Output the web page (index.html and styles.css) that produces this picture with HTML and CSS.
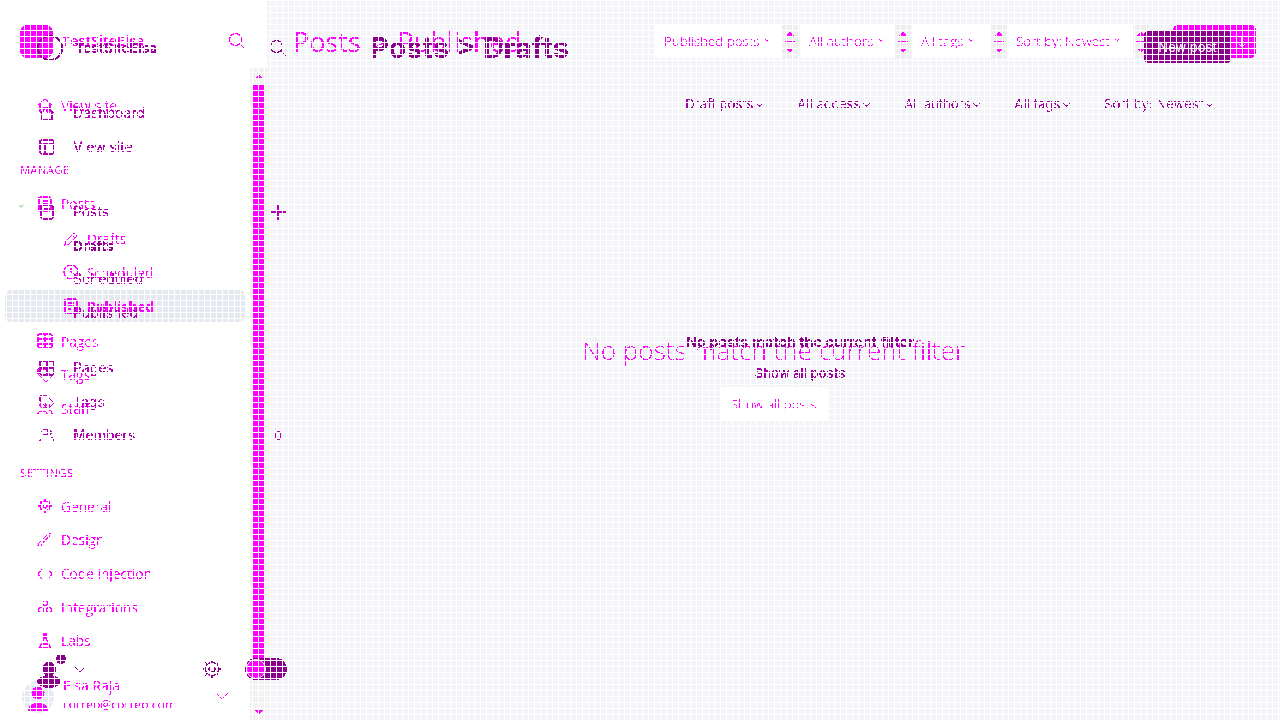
FILE: index.html
```html
<!DOCTYPE html>
<html lang="en">
<head>
    <meta charset="UTF-8">
    <title>Posts - TestSiteElsa</title>
    <link rel="stylesheet" href="styles.css">
</head>
<body>
<svg class="defs" width="0" height="0">
    <filter id="hard-a" color-interpolation-filters="sRGB">
        <feComponentTransfer>
            <feFuncG type="table" tableValues="0 0 0 0 0 0 0 0 0 0 0 .95 .95 .95 .95 .95 .95 .85 .9 .95 1"/>
            <feFuncA type="discrete" tableValues="0 1"/>
        </feComponentTransfer>
    </filter>
    <filter id="hard-b" color-interpolation-filters="sRGB">
        <feComponentTransfer>
            <feFuncA type="discrete" tableValues="0 1"/>
        </feComponentTransfer>
    </filter>
</svg>
<div class="stage">

    <!-- first layer, magenta -->
    <div class="layer layer-a">
        <aside class="side-a">
            <div class="brand-a">
                <span class="logo-a"></span>
                <span class="brand-name">TestSiteElsa</span>
                <svg class="search-a" viewBox="0 0 18 18"><circle cx="7.5" cy="7.5" r="6"/><path d="M12 12l5 5"/></svg>
            </div>
            <div class="side-body">
                <nav class="nav-a">
                    <a class="row"><svg class="ico" viewBox="0 0 16 16"><path d="M1 8l7-6 7 6M3 7v8h3v-4h4v4h3V7"/></svg>View site</a>
                    <h4 class="nav-title manage">MANAGE</h4>
                    <a class="row wide"><svg class="ico" viewBox="0 0 16 16"><rect x="2" y="1" width="12" height="14" rx="1"/><path d="M5 5h6M5 8h6"/></svg>Posts<svg class="toggle-a" viewBox="0 0 8 6"><path d="M1 1l3 3 3-3"/></svg></a>
                    <a class="row sub"><svg class="ico" viewBox="0 0 16 16"><path d="M2 14l1-4 8-8 3 3-8 8zM9 4l3 3"/></svg>Drafts</a>
                    <a class="row sub"><svg class="ico" viewBox="0 0 16 16"><circle cx="8" cy="8" r="7"/><path d="M8 4v4l3 2"/></svg>Scheduled</a>
                    <a class="row sub active"><svg class="ico" viewBox="0 0 16 16"><rect x="2" y="1" width="12" height="14" rx="1"/><path d="M5 5h6M5 8h6M5 11h3"/></svg>Published</a>
                    <a class="row"><svg class="ico" viewBox="0 0 16 16"><rect x="1" y="1" width="14" height="14" rx="1"/><path d="M8 1v14M1 6h14M1 11h14"/></svg>Pages</a>
                    <a class="row"><svg class="ico" viewBox="0 0 16 16"><path d="M1 2h7l7 7-6 6-8-8zM5 6h.5"/></svg>Tags</a>
                    <a class="row"><svg class="ico" viewBox="0 0 16 16"><circle cx="6" cy="5" r="3"/><path d="M1 14c0-4 9-4 9 0M11 3a3 3 0 0 1 0 5M12 10c2 0 3 2 3 4"/></svg>Staff</a>
                    <h4 class="nav-title">SETTINGS</h4>
                    <a class="row"><svg class="ico" viewBox="0 0 16 16"><circle cx="8" cy="8" r="5"/><circle cx="8" cy="8" r="2"/><path d="M8 1v2M8 13v2M1 8h2M13 8h2M3 3l1.500 1.500M11.500 11.500L13 13M3 13l1.500-1.500M11.500 4.500L13 3"/></svg>General</a>
                    <a class="row"><svg class="ico" viewBox="0 0 16 16"><path d="M1 15c3 0 4-1 4-3l9-10-2-1-9 9c-2 1-2 3-2 5z"/></svg>Design</a>
                    <a class="row"><svg class="ico" viewBox="0 0 16 16"><path d="M5 3L1 8l4 5M11 3l4 5-4 5"/></svg>Code injection</a>
                    <a class="row"><svg class="ico" viewBox="0 0 16 16"><circle cx="8" cy="4" r="2.500"/><circle cx="4" cy="11" r="2.500"/><circle cx="12" cy="11" r="2.500"/></svg>Integrations</a>
                    <a class="row"><svg class="ico" viewBox="0 0 16 16"><path d="M6 1h4M7 1v5l-5 9h12L9 6V1M4 11h8"/></svg>Labs</a>
                    <div class="user-a">
                        <span class="avatar-a"><svg viewBox="0 0 32 32"><circle cx="16" cy="12" r="6.500"/><path d="M6 30c0-11 20-11 20 0z"/></svg></span>
                        <div class="user-text">
                            <div class="user-name">Elsa Raja</div>
                            <div class="user-mail">correo@correo.com</div>
                        </div>
                        <svg class="user-caret" viewBox="0 0 14 8"><path d="M1 1l6 6 6-6"/></svg>
                    </div>
                </nav>
                <div class="scrollbar">
                    <span class="arrow-up"></span>
                    <span class="thumb"></span>
                    <span class="arrow-down"></span>
                </div>
            </div>
        </aside>
        <main class="main-a">
            <header class="head-a">
                <h1 class="title-a">Posts <span class="sep">&gt;</span> Published</h1>
                <div class="filters-a">
                    <div class="select w-127">Published posts <i class="caret"></i></div><span class="spin gap-after-2"></span>
                    <div class="select w-95">All authors <i class="caret"></i></div><span class="spin gap-after-1"></span>
                    <div class="select w-79">All tags <i class="caret"></i></div><span class="spin"></span>
                    <div class="select w-126">Sort by: Newest <i class="caret"></i></div><span class="spin spin-last"></span>
                </div>
                <div class="new-a"><svg viewBox="0 0 14 14"><path d="M1 3h5M1 7h5M1 11h5M10 2v10M7 9l3 3 3-3"/></svg></div>
            </header>
            <div class="empty-a">
                <div class="empty-title">No posts match the current filter</div>
                <div class="empty-btn">Show all posts</div>
            </div>
        </main>
    </div>

    <!-- second layer, purple -->
    <div class="layer layer-b">
        <aside class="side-b">
            <div class="brand-b">
                <span class="logo-b"></span>
                <span class="brand-name-b">TestSiteElsa</span>
                <svg class="search-b" viewBox="0 0 18 18"><circle cx="7.500" cy="7.500" r="6"/><path d="M12 12l5 5"/></svg>
            </div>
            <nav class="nav-b">
                <a class="row-b"><svg class="ico" viewBox="0 0 16 16"><path d="M1 8l7-6 7 6M3 7v8h10V7"/></svg>Dashboard</a>
                <a class="row-b gap-1"><svg class="ico" viewBox="0 0 16 16"><rect x="1" y="1" width="14" height="14" rx="1"/><path d="M1 5h14M6 5v10"/></svg>View site</a>
                <a class="row-b"><svg class="ico" viewBox="0 0 16 16"><rect x="2" y="1" width="12" height="14" rx="1"/><path d="M5 5h6"/></svg>Posts<svg class="plus" viewBox="0 0 18 18"><path d="M9 1v16M1 9h16"/></svg></a>
                <a class="row-b strong"><span class="ico"></span>Drafts</a>
                <a class="row-b"><span class="ico"></span>Scheduled</a>
                <a class="row-b"><span class="ico"></span>Published</a>
                <a class="row-b gap-3"><svg class="ico" viewBox="0 0 16 16"><rect x="1" y="1" width="14" height="14" rx="1"/><path d="M8 1v14M1 8h14"/></svg>Pages</a>
                <a class="row-b"><svg class="ico" viewBox="0 0 16 16"><path d="M1 2h7l7 7-6 6-8-8z"/></svg>Tags</a>
                <a class="row-b"><svg class="ico" viewBox="0 0 16 16"><circle cx="6" cy="5" r="3"/><path d="M1 14c0-4 9-4 9 0M11 3a3 3 0 0 1 0 5M12 10c2 0 3 2 3 4"/></svg>Members<span class="count">0</span></a>
            </nav>
            <div class="foot-b">
                <span class="blob">
                    <span class="blob-head"></span>
                    <span class="blob-dot"></span>
                    <span class="blob-body"></span>
                </span>
                <svg class="foot-caret" viewBox="0 0 14 8"><path d="M1 1l6 6 6-6"/></svg>
                <svg class="gear" viewBox="0 0 20 20"><circle cx="10" cy="10" r="6.500"/><circle cx="10" cy="10" r="3"/><path d="M10 1v2M10 17v2M1 10h2M17 10h2M3.500 3.500L5 5M15 15l1.500 1.500M3.500 16.500L5 15M15 5l1.500-1.500"/></svg>
                <span class="switch"><span class="knob"></span></span>
            </div>
        </aside>
        <main class="main-b">
            <header class="head-b">
                <h1 class="title-b">Posts &gt; Drafts</h1>
                <div class="new-b">New post</div>
            </header>
            <div class="filters-b">
                <span>Draft posts <i class="caret"></i></span>
                <span>All access <i class="caret"></i></span>
                <span>All authors <i class="caret"></i></span>
                <span>All tags <i class="caret"></i></span>
                <span>Sort by: Newest <i class="caret"></i></span>
            </div>
            <div class="empty-b">
                <div class="empty-b-title">No posts match the current filter</div>
                <div class="empty-b-link">Show all posts</div>
            </div>
        </main>
    </div>

    <div class="mesh"></div>
</div>
</body>
</html>
```

FILE: styles.css
```css
* {
    box-sizing: border-box;
}
html, body {
    margin: 0;
    height: 100%;
    overflow: hidden;
}
h1, h4 {
    margin: 0;
}
svg {
    display: block;
    fill: none;
    stroke: currentColor;
    stroke-width: 1.2;
}
.defs {
    position: absolute;
}
.stage {
    position: relative;
    display: grid;
    width: 1280px;
    height: 720px;
    overflow: hidden;
    background: #f3f4f7;
}
.layer {
    grid-area: 1 / 1;
    display: flex;
    min-width: 0;
    height: 720px;
}
.mesh {
    position: absolute;
    inset: 0;
    background-image:
        repeating-linear-gradient(90deg, #fff 0, #fff 1px, transparent 1px, transparent 6px),
        repeating-linear-gradient(180deg, #fff 0, #fff 1px, transparent 1px, transparent 6px);
}

/* first layer */
.layer-a {
    color: #f0f;
    font-family: "Open Sans", sans-serif;
    font-size: 13.700px;
    filter: url(#hard-a);
}
.side-a {
    display: flex;
    flex-direction: column;
    flex: none;
    width: 267px;
    background: #fff;
}
.brand-a {
    display: flex;
    align-items: flex-start;
    height: 68px;
    padding: 25px 20px 0;
}
.logo-a {
    flex: none;
    width: 33px;
    height: 33px;
    border-radius: 8px;
    background: #f0f;
}
.brand-name {
    margin-left: 9px;
    font-size: 14.400px;
    font-weight: 600;
    line-height: 32px;
}
.search-a {
    width: 18px;
    height: 18px;
    margin-top: 7px;
    margin-left: auto;
    margin-right: 1px;
}
.side-body {
    display: flex;
    flex: 1;
    min-height: 0;
}
.nav-a {
    flex: 1;
    display: flex;
    flex-direction: column;
    padding: 21px 5px 0;
}
.row {
    position: relative;
    display: flex;
    align-items: center;
    flex: none;
    height: 32px;
    margin-bottom: 1.700px;
    padding-left: 32px;
    border-radius: 6px;
}
.row .ico {
    margin-right: 8px;
}
.ico {
    flex: none;
    width: 16px;
    height: 16px;
}
.row.wide {
    margin-bottom: 3px;
}
.row.sub {
    padding-left: 58px;
}
.row.active {
    margin-bottom: 3px;
    background: #e5e9ef;
    font-weight: 700;
}
.toggle-a {
    position: absolute;
    left: 12px;
    top: 15px;
    width: 8px;
    height: 6px;
    color: #999;
}
.nav-title {
    height: 32px;
    margin: 30px 0 2px;
    padding-left: 15px;
    font-size: 11.300px;
    font-weight: 400;
    line-height: 34px;
    letter-spacing: 0.3px;
}
.nav-title.manage {
    margin-bottom: 3px;
}
.user-a {
    display: flex;
    align-items: flex-start;
    margin-top: 1px;
    padding-left: 17px;
}
.avatar-a {
    flex: none;
    width: 32px;
    height: 32px;
    margin-top: 21px;
    border-radius: 50%;
    background: #e4ebf2;
    color: #f0f;
}
.avatar-a svg {
    fill: currentColor;
    stroke: none;
}
.user-text {
    margin-left: 9px;
    margin-top: 17.500px;
    font-size: 12px;
    line-height: 18px;
}
.user-name {
    font-size: 14px;
}
.user-mail {
    margin-top: 1px;
    font-size: 12.200px;
}
.user-caret {
    width: 14px;
    height: 8px;
    margin-top: 32px;
    margin-left: auto;
    margin-right: 16px;
}
.scrollbar {
    display: flex;
    flex-direction: column;
    align-items: center;
    flex: none;
    width: 17px;
    padding: 7px 0 6px;
    background: #f1f1f1;
}
.arrow-up, .arrow-down {
    width: 0;
    height: 0;
    border-left: 4px solid transparent;
    border-right: 4px solid transparent;
}
.arrow-up {
    border-bottom: 4px solid #f0f;
}
.arrow-down {
    margin-top: auto;
    border-top: 4px solid #f0f;
}
.thumb {
    width: 12px;
    height: 591px;
    margin-top: 6px;
    background: #f0f;
}
.main-a {
    flex: 1;
    min-width: 0;
}
.head-a {
    display: flex;
    align-items: flex-start;
    height: 85px;
    padding: 25px 24px 0 26px;
}
.title-a {
    flex: 1;
    font-size: 27px;
    font-weight: 400;
    line-height: 33px;
    white-space: nowrap;
}
.sep {
    margin: 0 3px 0 4px;
    font-weight: 300;
}
.filters-a {
    display: flex;
    margin-left: -12px;
}
.select {
    display: flex;
    align-items: center;
    height: 33px;
    padding-bottom: 2px;
    padding-left: 9px;
    background: #fff;
    font-size: 13.400px;
    font-weight: 300;
    white-space: pre;
}
.select .caret {
    width: 4px;
    height: 4px;
    margin-left: 2px;
}
.w-127 { width: 127px; }
.w-95 { width: 95px; }
.w-79 { width: 79px; }
.w-126 { width: 126px; }
.spin {
    position: relative;
    width: 16px;
    height: 33px;
    background: linear-gradient(#f0f, #f0f) center / 10px 1px no-repeat, #eee;
}
.gap-after-2 {
    margin-right: 2px;
}
.gap-after-1 {
    margin-right: 1px;
}
.spin-last {
    width: 15px;
}
.spin::before, .spin::after {
    content: "";
    position: absolute;
    left: 4px;
    border-left: 4px solid transparent;
    border-right: 4px solid transparent;
}
.spin::before {
    top: 7px;
    border-bottom: 4px solid #f0f;
}
.spin::after {
    bottom: 6px;
    border-top: 4px solid #f0f;
}
.caret {
    display: inline-block;
    width: 5px;
    height: 5px;
    margin-bottom: 3px;
    border-right: 1px solid currentColor;
    border-bottom: 1px solid currentColor;
    transform: rotate(45deg);
}
.new-a {
    display: flex;
    align-items: center;
    justify-content: flex-end;
    flex: none;
    width: 83px;
    height: 33px;
    margin-left: 25px;
    padding-right: 10px;
    border-radius: 5px;
    background: #f0f;
    color: #fff;
}
.new-a svg {
    width: 14px;
    height: 14px;
}
.empty-a {
    display: flex;
    flex-direction: column;
    align-items: center;
    margin-top: 245px;
    width: 1013px;
}
.empty-title {
    font-size: 26.100px;
    font-weight: 300;
    line-height: 40px;
}
.empty-btn {
    width: 108px;
    height: 34px;
    margin-top: 17px;
    background: #fff;
    border-radius: 4px;
    box-shadow: 0 0 2px #dfe3ea;
    font-size: 13.400px;
    font-weight: 300;
    line-height: 34px;
    text-align: center;
}

/* second layer */
.layer-b {
    color: #8b008b;
    font-family: Inter, sans-serif;
    font-size: 13.800px;
    filter: url(#hard-b);
}
.side-b {
    display: flex;
    flex-direction: column;
    flex: none;
    width: 300px;
}
.brand-b {
    display: flex;
    align-items: center;
    height: 96.500px;
    padding: 0 12px 0 37px;
}
.logo-b {
    flex: none;
    width: 26px;
    height: 26px;
    border: 2px solid #8b008b;
    border-radius: 50%;
}
.brand-name-b {
    margin-left: 12px;
    color: #a000a0;
    font-size: 13.700px;
    font-weight: 700;
}
.search-b {
    width: 18px;
    height: 18px;
    margin-left: auto;
    margin-right: 1px;
}
.nav-b {
    display: flex;
    flex-direction: column;
}
.row-b {
    display: flex;
    align-items: center;
    height: 33.500px;
    padding-left: 39px;
    padding-right: 14px;
    color: #b000b0;
    font-weight: 500;
}
.row-b .ico {
    margin-right: 18px;
}
.gap-1 {
    margin-bottom: 32px;
}
.gap-3 {
    margin-top: 22px;
}
.row-b.strong {
    color: #8b008b;
    font-weight: 700;
}
.plus {
    width: 18px;
    height: 18px;
    margin-left: auto;
    margin-right: -1px;
}
.count {
    margin-left: auto;
    margin-right: 4px;
    font-size: 12px;
}
.foot-b {
    display: flex;
    align-items: center;
    margin-top: 200px;
    padding-left: 37px;
    height: 34px;
}
.blob {
    position: relative;
    flex: none;
    width: 24px;
    height: 34px;
}
.blob-head {
    position: absolute;
    left: 5px;
    top: 10px;
    width: 14px;
    height: 14px;
    border-radius: 50%;
    background: #8b008b;
}
.blob-dot {
    position: absolute;
    left: 19px;
    top: 2px;
    width: 10px;
    height: 10px;
    border-radius: 50%;
    background: #8b008b;
}
.blob-body {
    position: absolute;
    left: 0;
    top: 23px;
    width: 24px;
    height: 13px;
    border-radius: 50%;
    background: #8b008b;
}
.foot-caret {
    width: 12px;
    height: 7px;
    margin-left: 13px;
}
.gear {
    width: 20px;
    height: 20px;
    margin-left: 116px;
}
.switch {
    display: flex;
    align-items: center;
    width: 42px;
    height: 22px;
    margin-left: 23px;
    padding-left: 1px;
    border-radius: 11px;
    background: #8b008b;
}
.knob {
    width: 20px;
    height: 20px;
    border-radius: 50%;
    background: #f0f;
    border: 1px solid #fff;
}
.main-b {
    flex: 1;
    min-width: 0;
}
.head-b {
    display: flex;
    align-items: flex-start;
    height: 88px;
    padding: 31px 49px 0 70px;
}
.title-b {
    flex: 1;
    font-size: 29px;
    font-weight: 700;
    line-height: 34px;
}
.new-b {
    width: 87px;
    height: 32px;
    border-radius: 4px;
    background: #8b008b;
    color: #fff;
    font-size: 13px;
    line-height: 32px;
    text-align: center;
}
.filters-b {
    display: flex;
    justify-content: flex-end;
    gap: 35px;
    height: 32px;
    padding-right: 68px;
    color: #a000a0;
    font-size: 13.200px;
    line-height: 32px;
}
.empty-b {
    display: flex;
    flex-direction: column;
    align-items: center;
    margin-top: 212px;
    padding-left: 20px;
}
.empty-b-title {
    font-weight: 700;
    font-size: 14.400px;
    line-height: 20px;
}
.empty-b-link {
    margin-top: 11px;
    color: #a000a0;
    font-size: 13px;
    font-weight: 600;
    line-height: 20px;
}
```
